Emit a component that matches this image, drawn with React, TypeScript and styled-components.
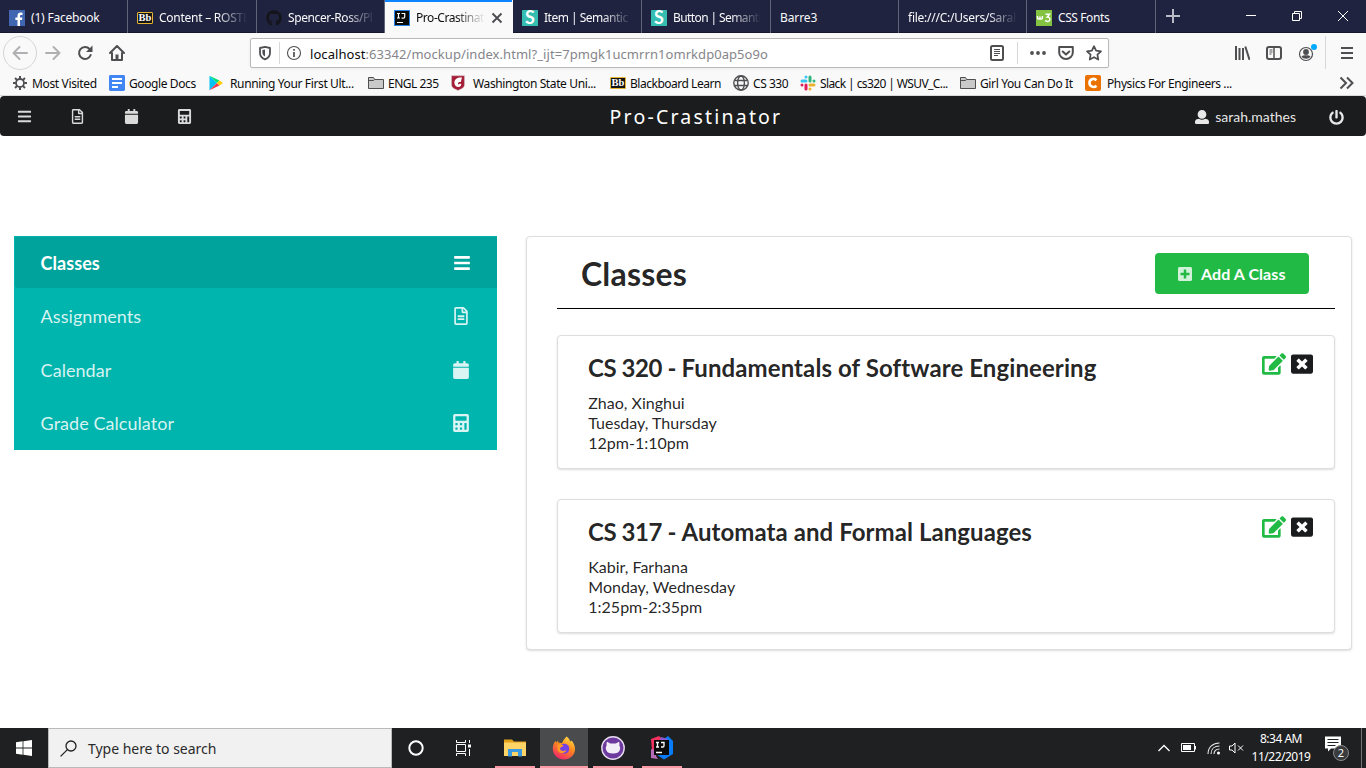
import React from "react";
import styled, { createGlobalStyle, css } from "styled-components";
import {
  FaBars,
  FaRegFileAlt,
  FaCalendar,
  FaCalculator,
  FaPowerOff,
  FaEdit,
  FaWindowClose,
  FaPlusSquare,
  FaGithub,
} from "react-icons/fa";

const ui = `"Noto Sans", "Open Sans", sans-serif`;
const lato = `Lato, "Liberation Sans", sans-serif`;

const GlobalStyle = createGlobalStyle`
  *, *::before, *::after { box-sizing: border-box; }
  html, body { margin: 0; padding: 0; background: #fff; overflow: hidden; }
  svg { display: block; flex: none; }
`;

const Screen = styled.div`
  width: 1366px;
  height: 768px;
  display: flex;
  flex-direction: column;
  overflow: hidden;
  background: #fff;
  font-family: ${ui};
`;

/* ---------- browser tabs ---------- */

const TabBar = styled.div`
  flex: none;
  height: 33px;
  display: flex;
  background: #202340;
  border-bottom: 1px solid #15172d;
`;

const TabItem = styled.div<{ $active?: boolean; $w: number }>`
  width: ${(p) => p.$w}px;
  height: 33px;
  display: flex;
  align-items: center;
  padding: 2px 9px 0 9px;
  gap: 6px;
  color: #f9f9fa;
  border-right: 1px solid #62647a;
  ${(p) =>
    p.$active &&
    css`
      background: #f9f9f9;
      color: #0c0c0d;
      border-right-color: #f9f9f9;
      box-shadow: inset 0 2px 0 #0a84ff;
    `}
`;

const TabTitle = styled.span<{ $fade?: boolean; $ls?: number }>`
  flex: 1;
  min-width: 0;
  overflow: hidden;
  white-space: nowrap;
  font-size: 12px;
  line-height: 18px;
  letter-spacing: ${(p) => p.$ls ?? -0.3}px;
  ${(p) =>
    p.$fade &&
    css`
      mask-image: linear-gradient(to right, #000 calc(100% - 30px), transparent);
    `}
`;

const NewTab = styled.div`
  width: 34px;
  display: flex;
  align-items: center;
  justify-content: center;
`;

const WindowButtons = styled.div`
  margin-left: auto;
  display: flex;
`;

const WindowButton = styled.div`
  width: 46px;
  height: 32px;
  display: flex;
  align-items: center;
  justify-content: center;
`;

/* ---------- navigation ---------- */

const NavBar = styled.div`
  flex: none;
  height: 38px;
  display: flex;
  align-items: center;
  background: #f9f9f9;
  padding: 1px 11px 0 3px;
`;

const NavButtons = styled.div`
  width: 247px;
  display: flex;
  align-items: center;
`;

const BackCircle = styled.div`
  width: 34px;
  height: 34px;
  border: 1px solid #d5d5d5;
  border-radius: 50%;
  display: flex;
  align-items: center;
  justify-content: center;
  margin-right: 8px;
`;

const NavIcon = styled.div`
  width: 16px;
  margin-right: 16px;
`;

const UrlBox = styled.div`
  width: 859px;
  height: 30px;
  display: flex;
  align-items: center;
  background: #fff;
  border: 1px solid #b9b9ba;
  border-radius: 2px;
  box-shadow: 0 1px 3px rgba(0, 0, 0, 0.06);
  padding: 0 6px 0 6px;
`;

const Divider = styled.i<{ $h: number; $l: number; $r: number }>`
  width: 1px;
  height: ${(p) => p.$h}px;
  margin: 0 ${(p) => p.$r}px 0 ${(p) => p.$l}px;
  background: #d7d7db;
`;

const UrlText = styled.span`
  flex: 1;
  margin-left: 8px;
  padding-top: 2px;
  font-size: 13px;
  letter-spacing: 0.06px;
  white-space: nowrap;
  color: #85858a;
  b {
    font-weight: 400;
    color: #0c0c0d;
  }
`;

const UrlActions = styled.div`
  display: flex;
  align-items: center;
  gap: 12px;
`;

const NavTools = styled.div`
  margin-left: auto;
  display: flex;
  align-items: center;
`;

const ToolSlot = styled.div<{ $w: number }>`
  width: ${(p) => p.$w}px;
`;

const Bookmarks = styled.div`
  flex: none;
  height: 25px;
  display: flex;
  align-items: center;
  background: #f9f9f9;
  border-bottom: 1px solid #d9d9da;
  padding-left: 12px;
  color: #0c0c0d;
`;

const Bookmark = styled.div<{ $w: number }>`
  width: ${(p) => p.$w}px;
  display: flex;
  align-items: center;
  white-space: nowrap;
`;

const BookmarkIcon = styled.div<{ $w: number }>`
  width: ${(p) => p.$w}px;
  flex: none;
`;

const BookmarkLabel = styled.span<{ $ls: number }>`
  padding-top: 2px;
  font-size: 12px;
  line-height: 18px;
  letter-spacing: ${(p) => p.$ls}px;
`;

const Overflow = styled.div`
  margin-left: auto;
  padding-right: 12px;
`;

/* ---------- app header ---------- */

const AppHeader = styled.header`
  flex: none;
  height: 40px;
  display: grid;
  grid-template-columns: 1fr auto 1fr;
  align-items: center;
  background: #1b1c1d;
  border-radius: 4px;
  color: rgba(255, 255, 255, 0.84);
`;

const HeaderIcons = styled.nav`
  display: flex;
  align-items: center;
  padding: 1px 0 0 17px;
`;

const HeaderIconSlot = styled.span`
  width: 53.3px;
  display: flex;
  svg {
    width: 15px;
    height: 15px;
  }
`;

const AppTitle = styled.h1`
  margin: 0;
  padding: 2px 0 0 26px;
  font: 400 19.5px / 28px ${ui};
  letter-spacing: 2.2px;
  color: #fff;
`;

const UserArea = styled.div`
  display: flex;
  align-items: center;
  justify-content: flex-end;
  padding: 2px 22px 0 0;
  font: 400 14px / 20px ${lato};
  color: rgba(255, 255, 255, 0.9);
`;

const UserName = styled.span`
  margin: 0 33px 0 6px;
`;

/* ---------- page ---------- */

const Page = styled.main`
  flex: 1;
  min-height: 0;
  display: flex;
  align-items: flex-start;
  padding: 100px 14px 0 14px;
  gap: 29px;
  font-family: ${lato};
  color: rgba(0, 0, 0, 0.87);
`;

const SideMenu = styled.nav`
  width: 483px;
  height: 214px;
  flex: none;
  display: grid;
  grid-template-rows: 53px 53px 54px 54px;
  background: #00b5ad;
`;

const SideItem = styled.a<{ $active?: boolean }>`
  display: flex;
  align-items: center;
  justify-content: space-between;
  padding: 1px 27px 0 26.600px;
  font-size: 18px;
  letter-spacing: 0.05px;
  color: rgba(255, 255, 255, 0.85);
  &:last-child {
    padding: 0 27px 1px 26.600px;
  }
  ${(p) =>
    p.$active &&
    css`
      margin: 1px 0 1px 1px;
      padding: 1px 26px 1px 25.600px;
      font-weight: 700;
      color: #fff;
      background: #00a39c;
      border-radius: 0 0 0 3px;
    `}
`;

const SideIcon = styled.span`
  width: 19px;
  display: flex;
  justify-content: center;
`;

const panel = css`
  border: 1px solid #dededf;
  border-radius: 4px;
  background: #fff;
  box-shadow: 0 1px 2px rgba(34, 36, 38, 0.15);
`;

const Panel = styled.section`
  ${panel}
  flex: 1;
  height: 414px;
  padding: 0 16px 0 30px;
`;

const PanelHead = styled.div`
  height: 72px;
  display: flex;
  align-items: center;
  justify-content: space-between;
  padding: 2px 26px 0 24px;
  border-bottom: 1px solid #000;
  margin-bottom: 26px;
`;

const PanelTitle = styled.h2`
  margin: 0;
  font-size: 32px;
  line-height: 40px;
  font-weight: 700;
  letter-spacing: 0.2px;
`;

const AddButton = styled.button`
  width: 154px;
  height: 41px;
  display: flex;
  align-items: center;
  padding: 1px 0 0 22px;
  gap: 8px;
  border: 0;
  border-radius: 4px;
  background: #21ba45;
  color: #fff;
  font: 700 16px / 16px ${lato};
  letter-spacing: 0.08px;
  white-space: nowrap;
  svg {
    opacity: 0.8;
  }
`;

const CardActions = styled.div`
  display: flex;
  align-items: flex-start;
  gap: 5px;
  svg:first-child {
    margin-top: -1px;
  }
`;

const Card = styled.article`
  ${panel}
  height: 134px;
  margin-bottom: 30px;
  padding: 17px 21px 0 30px;
  display: flex;
  justify-content: space-between;
  &:last-child ${CardActions} {
    margin-top: -1px;
  }
`;

const CardTitle = styled.h3`
  margin: 0 0 10px;
  font-size: 24px;
  line-height: 30px;
  font-weight: 700;
`;

const CourseCode = styled.span`
  letter-spacing: -0.42px;
`;

const CourseName = styled.span<{ $ls: number }>`
  letter-spacing: ${(p) => p.$ls}px;
`;

const CardLine = styled.p`
  margin: 0;
  padding-left: 0.300px;
  font-size: 16px;
  line-height: 20px;
`;

/* ---------- taskbar ---------- */

const Taskbar = styled.footer`
  flex: none;
  height: 40px;
  display: flex;
  background: #1f2021;
  color: #fff;
`;

const Cell = styled.div<{ $w: number; $lit?: boolean; $bar?: boolean; $gap?: number }>`
  width: ${(p) => p.$w}px;
  margin-right: ${(p) => p.$gap ?? 0}px;
  height: 40px;
  display: flex;
  align-items: center;
  justify-content: center;
  background: ${(p) => (p.$lit ? "#4a4b4c" : "transparent")};
  box-shadow: ${(p) => (p.$bar ? "inset 0 -2px 0 #fa9aa4" : "none")};
`;

const SearchBox = styled.div`
  width: 344px;
  height: 40px;
  display: flex;
  align-items: center;
  gap: 11px;
  padding-left: 11px;
  border: 1px solid #b9b9b9;
  background: #f1f1f1;
  color: #2b2b2b;
  font-size: 14px;
  letter-spacing: -0.03px;
`;

const Tray = styled.div`
  margin-left: auto;
  display: flex;
  align-items: center;
`;

const Clock = styled.div`
  width: 62px;
  text-align: center;
  font-size: 12px;
  line-height: 18px;
  letter-spacing: -0.5px;
  white-space: nowrap;
`;

const ShowDesktop = styled.div`
  width: 5px;
  height: 40px;
  border-left: 1px solid #707172;
`;

/* ---------- drawings ---------- */

const svg16 = { width: 16, height: 16, viewBox: "0 0 16 16" };
const GRAY = "#4f4f52";

const Letters: React.FC<{
  bg: string;
  fg?: string;
  text: string;
  size: number;
  font?: string;
  border?: string;
  h?: number;
  y?: number;
}> = ({ bg, fg = "#fff", text, size, font = "Liberation Serif", border, h = 16, y = 12 }) => (
  <svg {...svg16}>
    <rect
      x={border ? 0.5 : 0}
      y={(16 - h) / 2 + (border ? 0.5 : 0)}
      width={border ? 15 : 16}
      height={border ? h - 1 : h}
      fill={bg}
      stroke={border}
      rx="0.5"
    />
    <text x="8" y={y} textAnchor="middle" fontFamily={font} fontWeight="700" fontSize={size} fill={fg}>
      {text}
    </text>
  </svg>
);

const Facebook = () => (
  <svg {...svg16}>
    <rect width="16" height="16" fill="#4267b2" />
    <path
      d="M11 16V9.900h2l.35-2.400H11V6.100c0-.8.3-1.200 1.300-1.200h1.200V2.700c-.4 0-1-.1-1.700-.1-2 0-3.300 1.100-3.300 3.200v1.700H6.400v2.400h2.100V16z"
      fill="#fff"
    />
  </svg>
);
const Blackboard = () => (
  <Letters bg="#151515" border="#e5b532" text="Bb" size={10.5} h={12} y={11.4} />
);
const JetBrains = () => (
  <svg {...svg16}>
    <rect x="0.5" y="0.5" width="15" height="15" fill="#0b0b0c" stroke="#2583e8" />
    <path d="M3 3.500h3M4.500 3.500v4.500M3 8h3M7.500 3.500h3.200V7c0 .8-.5 1.200-1.300 1.200H7.600M3 12.500h6" stroke="#fff" strokeWidth="1.200" fill="none" />
  </svg>
);
const SemanticIcon = () => (
  <Letters bg="#35bdb2" text="S" size={18} font="Lato" y={14.4} />
);
const W3 = () => (
  <svg {...svg16}>
    <rect width="16" height="16" fill="#83c341" />
    <path d="M1.500 6v1.800c0 1.600 2.400 1.600 2.400 0V6.500v1.300c0 1.600 2.500 1.600 2.500 0V6M9.500 4.300h4L11.300 7c3.600-.3 3.300 5-.2 4.500-.9-.1-1.400-.7-1.700-1.300" fill="none" stroke="#fff" strokeWidth="1.500" />
  </svg>
);
const Folder = () => (
  <svg {...svg16} fill="#c9c9ca" stroke="#4f4f52">
    <path d="M.5 13.500v-11h5l1.200 2h8.800v9z" />
    <path d="M.5 5.500h5l1.200-1" fill="none" />
  </svg>
);
const Gear = () => (
  <svg {...svg16} stroke={GRAY} fill="none">
    <circle cx="8" cy="8" r="4" strokeWidth="1.800" />
    {[0, 45, 90, 135, 180, 225, 270, 315].map((a) => (
      <path key={a} d="M8 1v2.600" strokeWidth="2" transform={`rotate(${a} 8 8)`} />
    ))}
  </svg>
);
const Docs = () => (
  <svg {...svg16}>
    <rect width="16" height="16" rx="1.400" fill="#4285f4" />
    <path d="M3 4h10M3 8h10M3 12h6" stroke="#fff" strokeWidth="1.800" />
  </svg>
);
const Play = () => (
  <svg {...svg16}>
    <path d="M1.500.8v14.400L9 8z" fill="#00c3f7" />
    <path d="M1.500.8 9 8l2.400-2.400z" fill="#00e177" />
    <path d="M1.500 15.200 9 8l2.400 2.400z" fill="#f5374b" />
    <path d="M11.400 5.600 9 8l2.400 2.400L15 8z" fill="#ffce00" />
  </svg>
);
const Wsu = () => (
  <svg {...svg16}>
    <path d="M1.600.8h12.800v9c0 3-3.200 4.200-6.400 5.600C4.800 14 1.600 12.800 1.600 9.800z" fill="#a51c36" stroke="#c9b9bd" strokeWidth=".5" />
    <path d="M12 2.500C7 1.800 4 4.500 4.400 8.300c.3 2.500 2.200 4 4.600 3.700 1.700-.3 2.500-1.700 2.200-3.200H9.500c-.5 1-1.500.6-1.500-.4 0-1.200 1.400-1.800 2.800-1.300z" fill="#fff" />
  </svg>
);
const Globe = () => (
  <svg {...svg16} fill="none" stroke={GRAY} strokeWidth="1.400">
    <circle cx="8" cy="8" r="7.200" />
    <ellipse cx="8" cy="8" rx="3.400" ry="7" />
    <path d="M1.500 5.500h13M1.500 10.500h13" />
  </svg>
);
const Slack = () => (
  <svg {...svg16} fill="none" strokeWidth="3" strokeLinecap="round">
    <path d="M6 2v0M2 6h4" stroke="#36c5f0" />
    <path d="M10 2v4M14 6v0" stroke="#2eb67d" />
    <path d="M14 10h-4M10 14v0" stroke="#ecb22e" />
    <path d="M6 14v-4M2 10v0" stroke="#e01e5a" />
  </svg>
);
const Chegg = () => (
  <svg {...svg16}>
    <rect width="16" height="16" rx="2" fill="#eb7100" />
    <path d="M11.500 5.200c-3-2.700-7.200-.7-7 2.800.1 3.600 4.300 5.200 7 2.800" fill="none" stroke="#fff" strokeWidth="2.600" />
  </svg>
);

const Arrow: React.FC<{ flip?: boolean }> = ({ flip }) => (
  <svg {...svg16} fill="none" stroke="#b0b0b2" strokeWidth="2" strokeLinecap="round" strokeLinejoin="round">
    <path d="M15 8H1.500M7.500 2 1.500 8l6 6" transform={flip ? "matrix(-1 0 0 1 16 0)" : undefined} />
  </svg>
);
const Reload = () => (
  <svg {...svg16}>
    <path d="M13.700 10A6 6 0 1 1 12.600 4" fill="none" stroke={GRAY} strokeWidth="2" strokeLinecap="round" />
    <path d="M15.500.5v6.500H9z" fill={GRAY} />
  </svg>
);
const Home = () => (
  <svg {...svg16} fill="none" stroke={GRAY} strokeWidth="2" strokeLinejoin="round" strokeLinecap="round">
    <path d="M1 8l7-7 7 7M3 8v7h10V8" />
    <path d="M8 14V9.500" strokeWidth="3" strokeLinecap="butt" />
  </svg>
);
const Shield = () => (
  <svg {...svg16}>
    <path d="M8 1.900 13 3v5c0 3-2 5.300-5 6.300C5 13.300 3 11 3 8V3z" fill="none" stroke={GRAY} strokeWidth="1.800" strokeLinejoin="round" />
    <path d="M8 4.500v7C6.200 10.500 5.400 9.200 5.400 7.500V5z" fill={GRAY} />
  </svg>
);
const Info = () => (
  <svg {...svg16}>
    <circle cx="8" cy="8" r="6.500" fill="none" stroke={GRAY} strokeWidth="1.100" />
    <path d="M8 4v1.800M8 7v5" stroke={GRAY} strokeWidth="1.700" />
  </svg>
);
const Reader = () => (
  <svg {...svg16} fill="none" stroke={GRAY}>
    <rect x="2" y="1" width="12" height="14" rx="1.500" strokeWidth="2" />
    <path d="M5 4.500h6M5 6.500h6M5 8.500h6M5 10.500h4" />
  </svg>
);
const Dots = () => (
  <svg {...svg16} fill={GRAY}>
    <circle cx="2" cy="8" r="1.900" />
    <circle cx="8" cy="8" r="1.900" />
    <circle cx="14" cy="8" r="1.900" />
  </svg>
);
const Pocket = () => (
  <svg {...svg16} fill="none" stroke={GRAY} strokeWidth="2" strokeLinecap="round" strokeLinejoin="round">
    <path d="M1.200 2h13.600v5.500a6.800 6.500 0 0 1-13.600 0z" />
    <path d="M4.700 6.500 8 9.600l3.300-3.100" />
  </svg>
);
const Star = () => (
  <svg {...svg16}>
    <path d="M8 1.200l2.100 4.500 4.900.6-3.600 3.400.9 4.900L8 12.200l-4.300 2.400.9-4.900L1 6.300l4.900-.6z" fill="none" stroke={GRAY} strokeWidth="1.700" strokeLinejoin="round" />
  </svg>
);
const Library = () => (
  <svg {...svg16} stroke={GRAY} strokeWidth="2" fill="none">
    <path d="M2 1v14M5.500 3v12M9 3v12M11.300 1.500 15.500 14.800" />
  </svg>
);
const Sidebar = () => (
  <svg {...svg16} stroke={GRAY} fill="none">
    <rect x="1" y="2" width="14" height="12" rx="2" strokeWidth="2" />
    <path d="M8 2v12" strokeWidth="1.500" />
    <path d="M3.500 5h3M3.500 7h3M3.500 9h2" />
  </svg>
);
const Account = () => (
  <svg width="20" height="20" viewBox="0 0 20 20">
    <circle cx="8" cy="11" r="6.500" stroke={GRAY} fill="none" strokeWidth="1.200" />
    <circle cx="8" cy="9" r="2.900" fill={GRAY} />
    <path d="M3.500 13.500c1-1.600 8-1.600 9 0-1.800 3-7.200 3-9 0z" fill={GRAY} />
    <circle cx="16" cy="4" r="3" fill="#00a9ff" />
  </svg>
);
const Menu = () => (
  <svg {...svg16} stroke={GRAY} strokeWidth="2">
    <path d="M2 3h12M2 8h12M2 13h12" />
  </svg>
);
const Chevrons = () => (
  <svg {...svg16} stroke={GRAY} strokeWidth="2" fill="none">
    <path d="M2.500 2.500 8 8l-5.500 5.500M9 2.500 14.500 8 9 13.500" />
  </svg>
);
const UserBust = () => (
  <svg width="14" height="14" viewBox="0 0 512 512" fill="currentColor">
    <path d="M256 0c88.366 0 160 71.634 160 160s-71.634 160-160 160S96 248.366 96 160 167.634 0 256 0zm183.283 333.821l-71.313-17.828c-74.923 53.890-165.738 41.864-223.940 0l-71.313 17.828C29.981 344.505 0 382.903 0 426.955V464c0 26.510 21.490 48 48 48h416c26.510 0 48-21.490 48-48v-37.045c0-44.052-29.981-82.450-72.717-93.134z" />
  </svg>
);

const FileExplorer = () => (
  <svg width="22" height="20" viewBox="0 0 22 20">
    <path d="M0 1.500h8l2 2h12V18H0z" fill="#e0a01a" />
    <path d="M0 4.500h22V18H0z" fill="#fcd566" />
    <path d="M4 18.500V11h14v7.500h-4V14H8v4.500z" fill="#3c9be0" />
  </svg>
);
const Firefox = () => (
  <svg width="24" height="24" viewBox="0 0 24 24">
    <defs>
      <linearGradient id="ff" x1="0.8" y1="0" x2="0.3" y2="1">
        <stop offset="0" stopColor="#ffe14a" />
        <stop offset=".45" stopColor="#ff8a1e" />
        <stop offset="1" stopColor="#f0246b" />
      </linearGradient>
    </defs>
    <path
      d="M14.500.5c2.500 1.500 3.300 3.400 3.500 5 1-.2 1.500-.9 1.500-.9 1.700 1.700 3.500 4.500 3.500 8.400C23 19 18 23.500 12 23.500S.8 19 .8 12.500c0-3 1.200-6.200 2.700-7.800.2 1 .5 1.500.9 1.900L6 4.500l.6 2.300c1-.3 2.400-.2 3.500.4C11 4 12.800 2.500 14.500.5z"
      fill="url(#ff)"
    />
    <circle cx="12.300" cy="12.800" r="5" fill="#7542e5" />
    <path d="M5.500 9c2-1.500 4-.7 6 .6-1 1.800-3 1.300-3.500 2.600-.4 2.500 3.600 4 6.500 1.600-1 4.500-7.500 4.200-9 .2z" fill="#ff9a25" />
  </svg>
);
const GithubDesktop = () => (
  <svg width="24" height="24" viewBox="0 0 24 24">
    <circle cx="12" cy="12" r="11.200" fill="#6d3aa0" stroke="#e5dcef" strokeWidth="1.400" />
    <path d="M6 5.800l3.300 1.700h5.400L18 5.800c.6 1.400.6 2.600.3 3.600.9 1.200 1 2.600.8 3.700-.5 3-2.800 4.500-7.100 4.500S5.400 16 4.900 13c-.2-1.200 0-2.500.8-3.600-.3-1-.3-2.200.3-3.600z" fill="#f3eff8" />
  </svg>
);
const Intellij = () => (
  <svg width="24" height="24" viewBox="0 0 24 24">
    <path d="M1 3 9 0l5 5-4 14-8-5z" fill="#f5315f" />
    <path d="M1 13l6 1-1 6 2 3-7-1z" fill="#b56bb5" />
    <path d="M14 3l4-3 5 5v13l-9 5.500-6-4z" fill="#087cfa" />
    <path d="M11 1l7 2-4 4-5-1z" fill="#8a5bd0" />
    <rect x="4" y="4" width="15" height="15" fill="#0a0a0a" />
    <path d="M6 6.500h3M7.500 6.500V11M6 11h3M11 6.500h3v3.300c0 .8-.5 1.200-1.200 1.200H11M6 16.500h6" stroke="#fff" strokeWidth="1.300" fill="none" />
  </svg>
);

/* ---------- data ---------- */

interface TabData {
  title: string;
  icon?: React.ReactNode;
  fade?: boolean;
  active?: boolean;
  w: number;
  ls?: number;
}

const tabs: TabData[] = [
  { title: "(1) Facebook", icon: <Facebook />, w: 128, ls: -0.2 },
  { title: "Content – ROSTE", icon: <Blackboard />, fade: true, w: 129, ls: -0.25 },
  { title: "Spencer-Ross/Pl", icon: <FaGithub size={16} color="#14151c" />, fade: true, w: 128, ls: -0.4 },
  { title: "Pro-Crastinat", icon: <JetBrains />, fade: true, active: true, w: 128, ls: -0.45 },
  { title: "Item | Semantic U", icon: <SemanticIcon />, fade: true, w: 129, ls: -0.5 },
  { title: "Button | Semanti", icon: <SemanticIcon />, fade: true, w: 129, ls: -0.6 },
  { title: "Barre3", w: 128, ls: -0.1 },
  { title: "file:///C:/Users/Sarah", fade: true, w: 128, ls: -0.25 },
  { title: "CSS Fonts", icon: <W3 />, w: 129, ls: -0.4 },
];

const bookmarks = [
  { label: "Most Visited", icon: <Gear />, w: 97, iw: 20, ls: -0.35 },
  { label: "Google Docs", icon: <Docs />, w: 99, iw: 20, ls: -0.4 },
  { label: "Running Your First Ult...", icon: <Play />, w: 160, iw: 22, ls: -0.37 },
  { label: "ENGL 235", icon: <Folder />, w: 82, iw: 20, ls: -0.5 },
  { label: "Washington State Uni...", icon: <Wsu />, w: 160, iw: 23, ls: -0.38 },
  { label: "Blackboard Learn", icon: <Blackboard />, w: 123, iw: 20, ls: -0.48 },
  { label: "CS 330", icon: <Globe />, w: 67, iw: 20, ls: -0.45 },
  { label: "Slack | cs320 | WSUV_C...", icon: <Slack />, w: 160, iw: 20, ls: -0.6 },
  { label: "Girl You Can Do It", icon: <Folder />, w: 125, iw: 20, ls: -0.37 },
  { label: "Physics For Engineers ...", icon: <Chegg />, w: 160, iw: 22, ls: -0.4 },
];

const classes = [
  {
    code: "CS 320 - ",
    name: "Fundamentals of Software Engineering",
    ls: 0.09,
    lines: ["Zhao, Xinghui", "Tuesday, Thursday", "12pm-1:10pm"],
  },
  {
    code: "CS 317 - ",
    name: "Automata and Formal Languages",
    ls: 0.07,
    lines: ["Kabir, Farhana", "Monday, Wednesday", "1:25pm-2:35pm"],
  },
];

export default function App() {
  return (
    <Screen>
      <GlobalStyle />
      <TabBar>
        {tabs.map((t) => (
          <TabItem key={t.title} $active={t.active} $w={t.w}>
            {t.icon}
            <TabTitle $fade={t.fade} $ls={t.ls}>
              {t.title}
            </TabTitle>
            {t.active && (
              <svg width="12" height="12" viewBox="0 0 12 12" stroke="#4a4a4f" strokeWidth="1.800">
                <path d="M1.500 1.500l9 9M10.500 1.500l-9 9" />
              </svg>
            )}
          </TabItem>
        ))}
        <NewTab>
          <svg width="14" height="14" viewBox="0 0 14 14" stroke="#b9bac6" strokeWidth="2">
            <path d="M7 0v14M0 7h14" />
          </svg>
        </NewTab>
        <WindowButtons>
          <WindowButton>
            <svg width="10" height="10" stroke="#fff">
              <path d="M0 4.500h10" />
            </svg>
          </WindowButton>
          <WindowButton>
            <svg width="10" height="10" stroke="#fff" fill="none">
              <path d="M.5 2.500h7v7h-7zM2.500 2.500v-2h7v7h-2" />
            </svg>
          </WindowButton>
          <WindowButton>
            <svg width="10" height="10" stroke="#fff">
              <path d="M0 0l10 10M10 0 0 10" />
            </svg>
          </WindowButton>
        </WindowButtons>
      </TabBar>

      <NavBar>
        <NavButtons>
          <BackCircle>
            <Arrow />
          </BackCircle>
          <NavIcon>
            <Arrow flip />
          </NavIcon>
          <NavIcon>
            <Reload />
          </NavIcon>
          <NavIcon>
            <Home />
          </NavIcon>
        </NavButtons>
        <UrlBox>
          <Shield />
          <Divider $h={22} $l={6} $r={6} />
          <Info />
          <UrlText>
            <b>localhost</b>:63342/mockup/index.html?_ijt=7pmgk1ucmrrn1omrkdp0ap5o9o
          </UrlText>
          <UrlActions>
            <Reader />
            <Divider $h={22} $l={0} $r={0} />
            <Dots />
            <Pocket />
            <Star />
          </UrlActions>
        </UrlBox>
        <NavTools>
          <ToolSlot $w={32}>
            <Library />
          </ToolSlot>
          <ToolSlot $w={32}>
            <Sidebar />
          </ToolSlot>
          <ToolSlot $w={27}>
            <Account />
          </ToolSlot>
          <Divider $h={33} $l={0} $r={13} />
          <Menu />
        </NavTools>
      </NavBar>

      <Bookmarks>
        {bookmarks.map((b) => (
          <Bookmark key={b.label} $w={b.w}>
            <BookmarkIcon $w={b.iw}>{b.icon}</BookmarkIcon>
            <BookmarkLabel $ls={b.ls}>{b.label}</BookmarkLabel>
          </Bookmark>
        ))}
        <Overflow>
          <Chevrons />
        </Overflow>
      </Bookmarks>

      <AppHeader>
        <HeaderIcons>
          <HeaderIconSlot>
            <FaBars />
          </HeaderIconSlot>
          <HeaderIconSlot>
            <FaRegFileAlt />
          </HeaderIconSlot>
          <HeaderIconSlot>
            <FaCalendar />
          </HeaderIconSlot>
          <HeaderIconSlot>
            <FaCalculator />
          </HeaderIconSlot>
        </HeaderIcons>
        <AppTitle>Pro-Crastinator</AppTitle>
        <UserArea>
          <UserBust />
          <UserName>sarah.mathes</UserName>
          <FaPowerOff size={15} />
        </UserArea>
      </AppHeader>

      <Page>
        <SideMenu>
          <SideItem $active>
            Classes
            <SideIcon>
              <FaBars size={18} />
            </SideIcon>
          </SideItem>
          <SideItem>
            Assignments
            <SideIcon>
              <FaRegFileAlt size={18} />
            </SideIcon>
          </SideItem>
          <SideItem>
            Calendar
            <SideIcon>
              <FaCalendar size={18} />
            </SideIcon>
          </SideItem>
          <SideItem>
            Grade Calculator
            <SideIcon>
              <FaCalculator size={18} />
            </SideIcon>
          </SideItem>
        </SideMenu>

        <Panel>
          <PanelHead>
            <PanelTitle>Classes</PanelTitle>
            <AddButton>
              <FaPlusSquare size={16} />
              Add A Class
            </AddButton>
          </PanelHead>
          {classes.map((c) => (
            <Card key={c.name}>
              <div>
                <CardTitle>
                  <CourseCode>{c.code}</CourseCode>
                  <CourseName $ls={c.ls}>{c.name}</CourseName>
                </CardTitle>
                {c.lines.map((l) => (
                  <CardLine key={l}>{l}</CardLine>
                ))}
              </div>
              <CardActions>
                <FaEdit size={24} color="#21ba45" />
                <FaWindowClose size={22} color="#1b1c1d" />
              </CardActions>
            </Card>
          ))}
        </Panel>
      </Page>

      <Taskbar>
        <Cell $w={48}>
          <svg width="16" height="16" viewBox="0 0 16 16" fill="#fff">
            <path d="M0 2.200 6.600 1.300v6.200H0zM7.400 1.200 16 0v7.500H7.400zM0 8.400h6.600v6.300L0 13.800zM7.400 8.400H16V16l-8.600-1.200z" />
          </svg>
        </Cell>
        <SearchBox>
          <svg width="17" height="17" viewBox="0 0 17 17" fill="none" stroke="#222" strokeWidth="1.300">
            <circle cx="11" cy="6" r="5" />
            <path d="M7.400 9.600.6 16.400" />
          </svg>
          Type here to search
        </SearchBox>
        <Cell $w={48}>
          <svg width="16" height="16" viewBox="0 0 16 16">
            <circle cx="8" cy="8" r="6.700" fill="none" stroke="#fff" strokeWidth="2" />
          </svg>
        </Cell>
        <Cell $w={48} $gap={7}>
          <svg width="18" height="16" viewBox="0 0 18 16" fill="none" stroke="#fff">
            <path d="M1.500 0v2.500h9V0M1.500 16v-2.500h9V16M1.500 4.500h9v7h-9zM14.500 0v3M14.500 9v7" />
            <path d="M13 6h3" strokeWidth="3" />
          </svg>
        </Cell>
        <Cell $w={40} $bar $gap={5}>
          <FileExplorer />
        </Cell>
        <Cell $w={48} $lit $bar $gap={5}>
          <Firefox />
        </Cell>
        <Cell $w={40} $bar $gap={9}>
          <GithubDesktop />
        </Cell>
        <Cell $w={40} $bar>
          <Intellij />
        </Cell>
        <Tray>
          <Cell $w={24}>
            <svg width="12" height="8" viewBox="0 0 12 8" fill="none" stroke="#fff" strokeWidth="1.300">
              <path d="M.5 7 6 1.500 11.500 7" />
            </svg>
          </Cell>
          <Cell $w={26}>
            <svg width="16" height="10" viewBox="0 0 16 10">
              <path d="M.5.5h13v8H.5zM14.500 3v3.500" fill="none" stroke="#fff" />
              <rect x="2" y="2" width="8" height="5" fill="#fff" />
            </svg>
          </Cell>
          <Cell $w={24}>
            <svg width="14" height="13" viewBox="0 0 14 13" fill="none" stroke="#e8e8e8" strokeWidth="1.100">
              <path d="M1 12C1 5 6 1 12.500 1M4 12c0-5 3.500-8 8.500-8M7 12c0-3 2-5 5.500-5" />
              <circle cx="11.500" cy="11" r="1.500" fill="#fff" stroke="none" />
            </svg>
          </Cell>
          <Cell $w={20} $gap={4}>
            <svg width="15" height="12" viewBox="0 0 15 12" fill="none" stroke="#fff">
              <path d="M.5 4v4H3l3 3V1L3 4zM9 3.500l5 5M14 3.500l-5 5" />
            </svg>
          </Cell>
          <Clock>
            8:34 AM
            <br />
            11/22/2019
          </Clock>
          <Cell $w={49}>
            <svg width="26" height="26" viewBox="0 0 26 26">
              <path d="M1 1.500h16v12H7l-3 3v-3H1z" fill="#fff" />
              <path d="M3.500 4.500h11M3.500 7.500h11M3.500 10.500h8" stroke="#1f2021" />
              <circle cx="17" cy="18" r="7.500" fill="#3a3b3c" stroke="#8a8a8b" />
              <text x="17" y="22" textAnchor="middle" fontFamily="Noto Sans" fontSize="11" fill="#fff">
                2
              </text>
            </svg>
          </Cell>
          <ShowDesktop />
        </Tray>
      </Taskbar>
    </Screen>
  );
}
